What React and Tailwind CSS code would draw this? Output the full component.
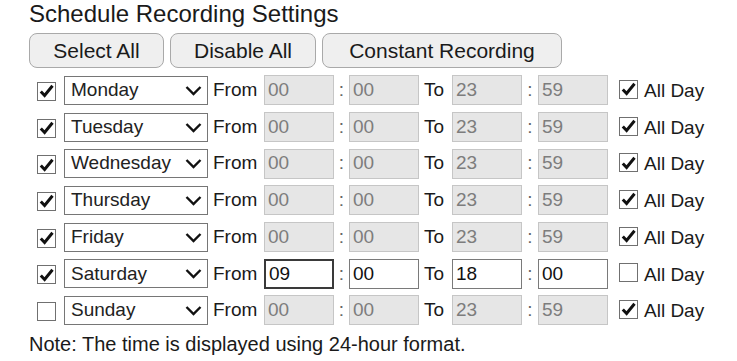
import React from "react";

const days = [
  { name: "Monday", on: true, allDay: true, from: ["00", "00"], to: ["23", "59"] },
  { name: "Tuesday", on: true, allDay: true, from: ["00", "00"], to: ["23", "59"] },
  { name: "Wednesday", on: true, allDay: true, from: ["00", "00"], to: ["23", "59"] },
  { name: "Thursday", on: true, allDay: true, from: ["00", "00"], to: ["23", "59"] },
  { name: "Friday", on: true, allDay: true, from: ["00", "00"], to: ["23", "59"] },
  { name: "Saturday", on: true, allDay: false, from: ["09", "00"], to: ["18", "00"], focus: true },
  { name: "Sunday", on: false, allDay: true, from: ["00", "00"], to: ["23", "59"] },
];

const CheckBox = ({ checked, className }) => (
  <span
    className={`flex items-center justify-center w-[19px] h-[19px] border border-[#707070] bg-white shrink-0 ${className}`}
  >
    {checked && (
      <svg width="15" height="14" viewBox="0 0 15 14">
        <path d="M1.8 7.5 L5.6 11.5 L13.5 1.8" fill="none" stroke="#111" strokeWidth="3" />
      </svg>
    )}
  </span>
);

const TimeBox = ({ value, enabled, focus }) => (
  <div
    className={`w-[70px] h-[30px] flex items-center pl-[3px] shrink-0 ${
      enabled
        ? focus
          ? "bg-white border-2 border-[#3a3a3a] text-[#111] pl-[2px]"
          : "bg-white border border-[#7a7a7a] text-[#111]"
        : "bg-[#e6e6e6] border border-[#c6c6c6] text-[#7d7d7d]"
    }`}
  >
    {value}
  </div>
);

const Row = ({ d }) => {
  const enabled = !d.allDay;
  return (
    <div className="flex items-center h-[36.7px]">
      <CheckBox checked={d.on} className="ml-[8px] mt-[2px]" />
      <div className="ml-[8px] w-[144px] h-[29px] border border-[#767676] bg-white flex items-center justify-between pl-[6px] pr-[5px] shrink-0 text-[#222]">
        <span>{d.name}</span>
        <svg width="17" height="11" viewBox="0 0 17 11">
          <path d="M1.5 2 L8.5 9 L15.5 2" fill="none" stroke="#111" strokeWidth="2.4" />
        </svg>
      </div>
      <span className="w-[56px] pl-[5px] shrink-0">From</span>
      <TimeBox value={d.from[0]} enabled={enabled} focus={d.focus} />
      <span className="w-[15px] text-center text-[#666] shrink-0">:</span>
      <TimeBox value={d.from[1]} enabled={enabled} />
      <span className="w-[33px] pl-[5px] shrink-0">To</span>
      <TimeBox value={d.to[0]} enabled={enabled} />
      <span className="w-[16px] text-center text-[#666] shrink-0">:</span>
      <TimeBox value={d.to[1]} enabled={enabled} />
      <CheckBox checked={d.allDay} className="ml-[11px] -mt-[2px]" />
      <span className="ml-[6px] mt-[2px]">All Day</span>
    </div>
  );
};

export default function App() {
  return (
    <div className="w-[737px] h-[361px] bg-white pl-[29px] font-['Liberation_Sans',Arial,sans-serif] text-[#1a1a1a] overflow-hidden">
      <h1 className="text-[24px] leading-[26px] pt-[1px]">Schedule Recording Settings</h1>
      <div className="flex gap-[6px] mt-[6px] text-[21px]">
        <button className="w-[135px] h-[35px] rounded-[8px] border border-[#a9a9a9] bg-[#efefef]">
          Select All
        </button>
        <button className="w-[146px] h-[35px] rounded-[8px] border border-[#a9a9a9] bg-[#efefef]">
          Disable All
        </button>
        <button className="w-[240px] h-[35px] rounded-[8px] border border-[#a9a9a9] bg-[#efefef]">
          Constant Recording
        </button>
      </div>
      <div className="mt-[4px] text-[19px]">
        {days.map((d) => (
          <Row key={d.name} d={d} />
        ))}
      </div>
      <p className="text-[20px] leading-[22px] mt-[4px]">
        Note: The time is displayed using 24-hour format.
      </p>
    </div>
  );
}
